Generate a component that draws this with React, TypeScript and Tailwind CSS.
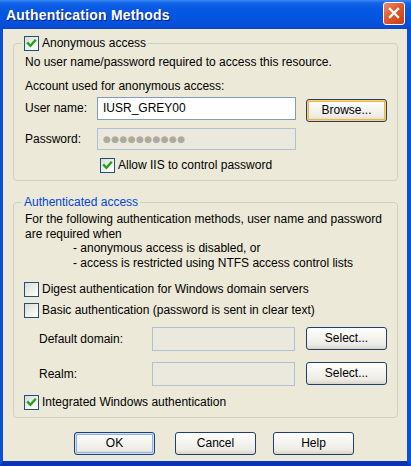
import React from 'react';

function CheckBox({ checked }: { checked?: boolean }) {
	return (
		<span className="w-[15px] h-[15px] shrink-0 border border-[#1C5180] bg-[linear-gradient(135deg,#DCDBD5_0%,#F2F1EC_60%,#FFFFFF_100%)] flex items-center justify-center">
			{checked && (
				<svg width="11" height="11" viewBox="0 0 11 11">
					<path d="M2 5.2 L4.4 7.8 L9 2.6" fill="none" stroke="#21A121" strokeWidth="2.4" strokeLinecap="square" />
				</svg>
			)}
		</span>
	);
}

function Button({ children, ring, className = '' }: { children: React.ReactNode; ring?: 'orange' | 'blue'; className?: string }) {
	const ringCls =
		ring === 'orange'
			? 'shadow-[inset_0_0_0_1px_#F8D27B,inset_0_0_0_2px_#F5B43C]'
			: ring === 'blue'
				? 'shadow-[inset_0_0_0_1px_#CDE1FB,inset_0_0_0_2px_#8DB2E8]'
				: '';
	return (
		<div
			className={`w-[81px] h-[23px] shrink-0 rounded-[3px] border border-[#1D3F72] bg-[linear-gradient(to_bottom,#FFFFFF_0%,#F6F5F1_40%,#ECEBE5_80%,#D9D4C8_100%)] flex items-center justify-center text-[12px] ${ringCls} ${className}`}
		>
			{children}
		</div>
	);
}

export default function App() {
	return (
		<div className="w-[411px] h-[466px] flex flex-col font-['Liberation_Sans',Arial,sans-serif] text-[12px] leading-[15px] text-black select-none">
			{/* title bar */}
			<div className="h-[29px] shrink-0 flex items-center justify-between pl-[6px] pr-[6px] bg-[linear-gradient(to_bottom,#3A8AF2_0%,#1465E8_10%,#0758E2_30%,#0454E0_60%,#0550DA_85%,#0A47C6_100%)]">
				<span className="text-white font-bold text-[14px] leading-[18px] tracking-[0.2px] [text-shadow:1px_1px_0_#0A1E80]">Authentication Methods</span>
				<div className="w-[22px] h-[23px] mt-[-3px] rounded-[3px] border border-white bg-[linear-gradient(135deg,#EE8A68_0%,#E05A30_45%,#C93D16_100%)] flex items-center justify-center">
					<svg width="12" height="12" viewBox="0 0 12 12">
						<path d="M2 2 L10 10 M10 2 L2 10" stroke="#FFFFFF" strokeWidth="2.4" strokeLinecap="square" />
					</svg>
				</div>
			</div>

			{/* window body */}
			<div className="h-[437px] border-l-[3px] border-r-[4px] border-b-[5px] border-[#0A4FD6] border-b-[#0B33B4] bg-[#ECE9D8]">
				<div className="pt-[7px] pl-[10px] pr-[9px]">
					{/* anonymous access */}
					<fieldset className="border border-[#D0D0BF] rounded-[4px] pb-[7px]">
						<legend className="ml-[8px] px-[2px] flex items-center gap-[3px]">
							<CheckBox checked />
							<span>Anonymous access</span>
						</legend>
						<div className="pl-[11px]">
							<div className="mt-[3px] h-[16px] flex items-center">No user name/password required to access this resource.</div>
							<div className="mt-[8px] h-[16px] flex items-center">Account used for anonymous access:</div>
							<div className="mt-[3px] flex items-start">
								<span className="w-[72px] h-[23px] flex items-center">User name:</span>
								<div className="w-[199px] h-[23px] border border-[#7F9DB9] bg-white flex items-center pl-[5px]">IUSR_GREY00</div>
								<Button ring="orange" className="ml-[10px] mt-[2px]">Browse...</Button>
							</div>
							<div className="mt-[6px] flex items-center">
								<span className="w-[72px]">Password:</span>
								<div className="w-[199px] h-[22px] border border-[#AFC2D2] bg-[#EBE9DD] flex items-center pl-[5px] text-[#ACAA9C] text-[9px] tracking-[0.4px] font-['DejaVu_Sans',sans-serif]">●●●●●●●●●●</div>
							</div>
							<div className="mt-[8px] pl-[75px] flex items-center gap-[3px]">
								<CheckBox checked />
								<span>Allow IIS to control password</span>
							</div>
						</div>
					</fieldset>

					{/* authenticated access */}
					<fieldset className="mt-[14px] border border-[#D0D0BF] rounded-[4px] pb-[7px]">
						<legend className="ml-[8px] px-[2px] text-[#0046D5]">Authenticated access</legend>
						<div className="pl-[11px]">
							<div className="mt-[2px] leading-[14.5px]">
								<div>For the following authentication methods, user name and password</div>
								<div>are required when</div>
								<div className="pl-[48px]">- anonymous access is disabled, or</div>
								<div className="pl-[48px]">- access is restricted using NTFS access control lists</div>
							</div>
							<div className="mt-[12px] -ml-[1px] flex items-center gap-[3px]">
								<CheckBox />
								<span>Digest authentication for Windows domain servers</span>
							</div>
							<div className="mt-[6px] -ml-[1px] flex items-center gap-[3px]">
								<CheckBox />
								<span>Basic authentication (password is sent in clear text)</span>
							</div>
							<div className="mt-[9px] pl-[14px] flex items-start">
								<span className="w-[113px] h-[24px] flex items-center">Default domain:</span>
								<div className="w-[143px] h-[24px] border border-[#AFC2D2] bg-[#EBE9DD]" />
								<Button className="ml-[11px]">Select...</Button>
							</div>
							<div className="mt-[11px] pl-[14px] flex items-start">
								<span className="w-[113px] h-[24px] flex items-center">Realm:</span>
								<div className="w-[143px] h-[24px] border border-[#AFC2D2] bg-[#EBE9DD]" />
								<Button className="ml-[11px]">Select...</Button>
							</div>
							<div className="mt-[9px] -ml-[1px] flex items-center gap-[3px]">
								<CheckBox checked />
								<span>Integrated Windows authentication</span>
							</div>
						</div>
					</fieldset>
				</div>

				{/* dialog buttons */}
				<div className="mt-[14px] flex">
					<Button ring="blue" className="ml-[71px]">OK</Button>
					<Button className="ml-[20px]">Cancel</Button>
					<Button className="ml-[17px]">Help</Button>
				</div>
			</div>
		</div>
	);
}
